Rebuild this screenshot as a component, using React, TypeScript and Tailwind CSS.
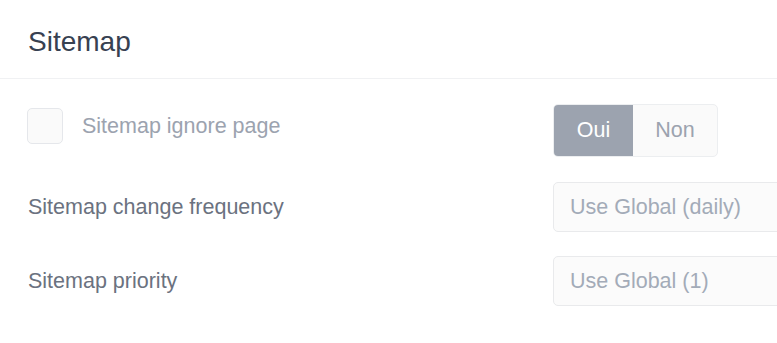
export default function App() {
  return (
    <div className="w-[777px] h-[343px] overflow-hidden bg-white font-['Liberation_Sans',Arial,sans-serif]">
      <div className="h-[79px] border-b border-[#f0f1f3] px-[28px] pt-[24px]">
        <h2 className="text-[28px] leading-[36px] text-[#374151]">Sitemap</h2>
      </div>

      <div className="pl-[27px] pt-[25px]">
        {/* ignore page */}
        <div className="flex items-start">
          <label className="flex items-center w-[526px] shrink-0 pt-[4px]">
            <span className="w-[36px] h-[36px] rounded-[5px] border border-[#e5e7eb] bg-[#fafafa]" />
            <span className="ml-[19px] text-[21.5px] leading-[24px] text-[#9ca3af]">Sitemap ignore page</span>
          </label>
          <div className="flex h-[53px] w-[165px] shrink-0 rounded-[5px] border border-[#eceef0] bg-[#fafafa] overflow-hidden">
            <button className="w-[79px] bg-[#9ca3af] text-white text-[21.5px]">Oui</button>
            <button className="flex-1 text-[#9ca3af] text-[21.5px]">Non</button>
          </div>
        </div>

        {/* change frequency */}
        <div className="flex items-center mt-[25px]">
          <div className="w-[526px] shrink-0 pl-[1px] text-[21.5px] leading-[24px] text-[#6b7280]">Sitemap change frequency</div>
          <div className="flex items-center h-[50px] w-[280px] shrink-0 rounded-[5px] border border-[#e9eaec] bg-[#fbfbfb] pl-[16px] text-[21.5px] text-[#a3abb8]">
            Use Global (daily)
          </div>
        </div>

        {/* priority */}
        <div className="flex items-center mt-[24px]">
          <div className="w-[526px] shrink-0 pl-[1px] text-[21.5px] leading-[24px] text-[#6b7280]">Sitemap priority</div>
          <div className="flex items-center h-[50px] w-[280px] shrink-0 rounded-[5px] border border-[#e9eaec] bg-[#fbfbfb] pl-[16px] text-[21.5px] text-[#a3abb8]">
            Use Global (1)
          </div>
        </div>
      </div>
    </div>
  );
}
